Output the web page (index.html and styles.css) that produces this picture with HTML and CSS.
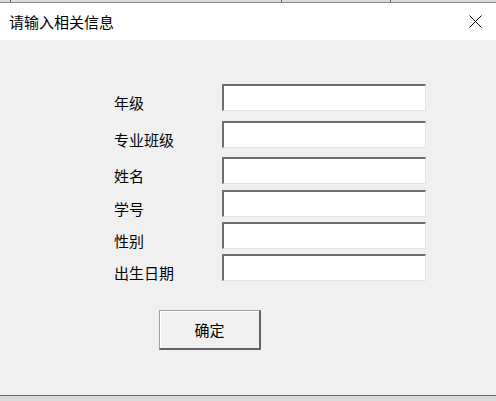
FILE: index.html
```html
<!DOCTYPE html>
<html>
<head>
  <meta charset="utf-8">
  <title>请输入相关信息</title>
  <link rel="stylesheet" href="styles.css">
</head>
<body>
  <div class="backdrop">
    <span class="seg seg-a"></span>
    <span class="seg seg-b"></span>
    <span class="seg seg-c"></span>
    <span class="seg seg-d"></span>
  </div>
  <div class="dialog">
    <div class="titlebar">
      <span class="title">请输入相关信息</span>
      <span class="close">
        <svg width="13" height="13" viewBox="0 0 13 13">
          <path d="M0.5 0.5 L12.5 12.5 M12.5 0.5 L0.5 12.5" stroke="#000" stroke-width="1" fill="none"/>
        </svg>
      </span>
    </div>
    <div class="content">
      <form class="form" onsubmit="event.preventDefault();">
        <div class="row row-37"><label>年级</label><input type="text"></div>
        <div class="row row-36"><label>专业班级</label><input type="text"></div>
        <div class="row row-33"><label>姓名</label><input type="text"></div>
        <div class="row row-32"><label>学号</label><input type="text"></div>
        <div class="row row-32"><label>性别</label><input type="text"></div>
        <div class="row"><label>出生日期</label><input type="text"></div>
        <div class="actions">
          <button type="submit" class="btn">确定</button>
        </div>
      </form>
    </div>
  </div>
  <div class="bottom"></div>
</body>
</html>
```
FILE: styles.css
```css
body {
  margin: 0;
  font-family: "Noto Sans CJK SC", "Liberation Sans", sans-serif;
  background-color: #dadada;
}

.backdrop {
  display: flex;
  height: 2px;
  background-color: #dcdcdc;
  border-bottom: 1px solid #8a8a8a;
}

.backdrop .seg {
  border-right: 1px solid #6a6a6a;
}

.seg-a { width: 10px; }
.seg-b { width: 270px; }
.seg-c { width: 108px; }
.seg-d { flex: 1; border-right: none !important; }

.titlebar {
  height: 37px;
  background-color: #fff;
  display: flex;
  align-items: center;
  justify-content: space-between;
}

.title {
  padding-left: 9px;
  font-size: 15px;
  color: #000;
}

.close {
  width: 13px;
  height: 13px;
  margin-right: 14px;
}

.close svg {
  display: block;
}

.content {
  height: 355px;
  background-color: #f0f0f0;
  border-bottom: 1px solid #646464;
}

.form {
  padding-top: 44px;
  padding-left: 114px;
}

.row {
  display: flex;
  align-items: flex-start;
  height: 27px;
}

.row-37 { height: 37px; }
.row-36 { height: 36px; }
.row-33 { height: 33px; }
.row-32 { height: 32px; }

.row label {
  width: 108px;
  font-size: 15px;
  line-height: 16px;
  color: #000;
  margin-top: 11px;
}

.row input[type="text"] {
  width: 204px;
  height: 27px;
  box-sizing: border-box;
  margin: 0;
  padding: 0 3px;
  background-color: #fff;
  border-top: 2px solid #6e6e6e;
  border-left: 2px solid #6e6e6e;
  border-right: 1px solid #e3e3e3;
  border-bottom: 1px solid #e3e3e3;
  outline: none;
}

.actions {
  padding-top: 29px;
  padding-left: 45px;
}

.btn {
  width: 102px;
  height: 40px;
  box-sizing: border-box;
  background-color: #f0f0f0;
  border-top: 1px solid #a0a0a0;
  border-left: 1px solid #a0a0a0;
  border-right: 2px solid #646464;
  border-bottom: 2px solid #646464;
  box-shadow: inset 1px 1px 0 #fff;
  font-family: "Noto Sans CJK SC", sans-serif;
  font-size: 15px;
  color: #000;
  padding: 0;
  cursor: pointer;
}

.bottom {
  height: 5px;
  background-color: #dadada;
}
```
